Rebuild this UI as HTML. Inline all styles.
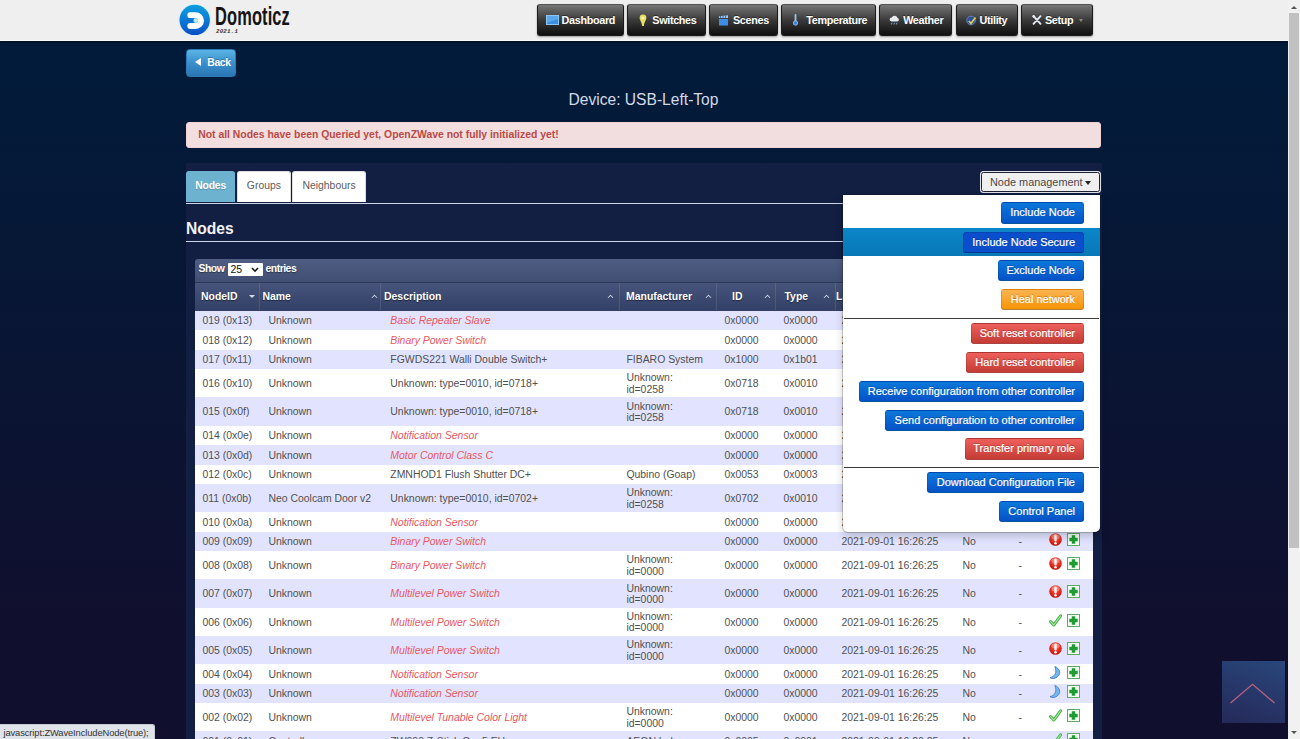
<!DOCTYPE html>
<html lang="en">
<head>
<meta charset="utf-8">
<title>Domoticz</title>
<style>
*{box-sizing:border-box;}
html,body{margin:0;padding:0;}
body{width:1300px;height:739px;overflow:hidden;position:relative;font-family:"Liberation Sans",Arial,sans-serif;font-size:11px;color:#444;background:#0a1432;}
#page{position:absolute;left:0;top:0;width:1287.5px;height:739px;overflow:hidden;background:linear-gradient(180deg,#021b3a 0px,#021b3a 60px,#100f2e 620px,#100f2e 739px);}
/* ---------- navbar ---------- */
#nav{position:absolute;left:0;top:0;width:100%;height:40.5px;background:#efefef;border-bottom:1px solid #fafafa;box-shadow:0 1px 2px rgba(0,0,0,.6);}
#logo{position:absolute;left:178px;top:3px;width:33px;height:33px;}
#brand{position:absolute;left:215px;top:1.3px;font-size:26.5px;line-height:30px;color:#151515;transform:scaleX(.62);transform-origin:0 0;white-space:nowrap;letter-spacing:.2px;font-weight:bold;}
#ver{position:absolute;left:216px;top:29.3px;font:italic bold 5.8px/6px "Liberation Mono",monospace;color:#333;letter-spacing:.2px;}
.nb{position:absolute;top:4px;height:32px;border-radius:3px;background:linear-gradient(180deg,#767676 0%,#585858 25%,#3a3a3a 50%,#242424 75%,#0f0f0f 100%);border:1px solid #1a1a1a;border-top-color:#555;box-shadow:0 1px 2px rgba(0,0,0,.35);color:#fff;font-weight:bold;font-size:10.8px;line-height:30px;white-space:nowrap;letter-spacing:-.33px;text-shadow:0 -1px 0 rgba(0,0,0,.4);}
.nb span{position:absolute;top:0;}
.nb svg{position:absolute;}
/* ---------- page head ---------- */
#back{position:absolute;left:186px;top:49px;width:49.5px;height:27.5px;border-radius:3.5px;background:linear-gradient(180deg,#5ab4e4 0%,#3a8fcc 50%,#2a76b4 100%);border:1px solid #2f7ab5;color:#fff;font-weight:bold;font-size:10.4px;letter-spacing:-.3px;line-height:25px;text-shadow:0 -1px 0 rgba(0,0,0,.25);}
#back span{position:absolute;left:20.2px;top:0;}
#back i{position:absolute;left:7.8px;top:8.3px;width:0;height:0;border-top:4.7px solid transparent;border-bottom:4.7px solid transparent;border-right:6.4px solid #fff;}
#title{position:absolute;left:0;top:90.4px;width:1287px;text-align:center;font-size:15.6px;line-height:20px;color:#d2dae8;}
#alert{position:absolute;left:186px;top:121.8px;width:915px;height:26.2px;border-radius:3px;background:#f2dede;border:1px solid #eed3d7;color:#b94a48;font-weight:bold;font-size:10.4px;line-height:24.4px;padding-left:11.2px;}
#panel{position:absolute;left:186px;top:163px;width:916px;height:600px;background:#121f43;}
.tab{position:absolute;top:171px;height:30.6px;border-radius:3px 3px 0 0;background:#fff;border:1px solid #ddd;border-bottom:none;color:#5c5c5c;font-size:10.4px;line-height:27.4px;text-align:center;}
.tab.on{background:#6db3cf;border-color:#6db3cf;color:#fff;font-weight:bold;letter-spacing:-.2px;text-shadow:0 1px 1px rgba(0,0,0,.2);}
.hr{position:absolute;left:186px;height:1.2px;background:#cdd5e6;width:912px;}
#h2{position:absolute;left:186px;top:219px;font-size:15.6px;line-height:20px;font-weight:bold;color:#f2f2f4;}
#nm{position:absolute;left:980.5px;top:172.2px;width:119px;height:20.2px;border-radius:2.5px;background:#efefef;border:1px solid #1c2030;box-shadow:0 0 0 1px #dfe1e8;color:#4a4a4a;font-size:10.9px;line-height:18px;padding-left:8.5px;}
#nm i{position:absolute;right:7.5px;top:7.5px;width:0;height:0;border-left:3.5px solid transparent;border-right:3.5px solid transparent;border-top:4px solid #222;}
/* ---------- table ---------- */
#tbar{position:absolute;left:194.5px;top:259px;width:898.5px;height:24px;border-radius:3px 3px 0 0;background:linear-gradient(180deg,#4f5d82 0%,#465479 60%,#414e73 100%);color:#fff;font-weight:bold;font-size:10.45px;letter-spacing:-.5px;line-height:19px;text-shadow:0 1px 1px rgba(0,0,0,.4);}
#thead{position:absolute;left:194.5px;top:282.4px;width:898.5px;height:28.3px;background:linear-gradient(180deg,#47557c 0%,#3c4a71 50%,#333f66 100%);border-top:1px solid #2c3757;color:#fff;font-weight:bold;font-size:10.45px;line-height:27.6px;text-shadow:0 1px 1px rgba(0,0,0,.5);}
#thead b{position:absolute;top:0;font-weight:bold;}
#thead u{position:absolute;top:0;width:1px;height:27px;background:rgba(255,255,255,.10);border-left:1px solid rgba(0,0,0,.18);width:2px;}
#thead i{position:absolute;top:12px;width:5px;height:5px;}
#tb{position:absolute;left:194.5px;top:310.7px;width:898.5px;border-collapse:collapse;table-layout:fixed;font-size:10.45px;line-height:11.5px;color:#505050;}
#tb td{padding:1.2px 0 0 .4px;vertical-align:middle;white-space:nowrap;overflow:hidden;}
#tb tr{height:19.5px;background:#fff;}
#tb tr.o{background:#e2e4ff;}
#tb tr.d{height:28.2px;}
#tb td.r{color:#e8565f;font-style:italic;}
#tb td:nth-child(4){padding-left:1.3px;}
#sel{position:absolute;left:33px;top:4px;width:35.4px;height:13px;background:#fff;border-radius:1px;color:#111;font-weight:normal;font-size:10.5px;letter-spacing:0;line-height:13px;padding-left:3px;text-shadow:none;}
#sel svg{position:absolute;right:3.5px;top:3.6px;}
#thead i.up{border-left:1.5px solid transparent;}
#thead i.up:after{content:"";position:absolute;left:0;top:0;width:4px;height:4px;border-left:1.7px solid #e4e7f0;border-top:1.7px solid #e4e7f0;transform:rotate(45deg) scale(.8);}
#thead i.dn:after{content:"";position:absolute;left:0;top:0;width:0;height:0;border-left:3px solid transparent;border-right:3px solid transparent;border-top:3.500px solid #d8dce8;}
.ic{vertical-align:middle;position:relative;top:-2.3px;}
/* ---------- dropdown ---------- */
#dd{position:absolute;left:843.2px;top:195.2px;width:256.8px;height:336.6px;background:#fff;border-radius:0 0 5px 5px;box-shadow:0 0 0 1px rgba(0,0,0,.18),0 4px 8px rgba(0,0,0,.2);}
#hl{position:absolute;left:0;top:33px;width:100%;height:28px;background:linear-gradient(180deg,#0a86c8,#0878b6);}
.dv{position:absolute;left:1px;right:1px;height:1.200px;background:#3a3a3a;}
.bt{position:absolute;height:21.100px;border-radius:3px;color:#fff;font-size:11px;line-height:19px;text-align:right;padding-right:7.7px;white-space:nowrap;text-shadow:0 -1px 0 rgba(0,0,0,.25);-webkit-text-stroke:.2px #fff;border:1px solid rgba(0,0,0,.12);border-bottom-color:rgba(0,0,0,.28);}
.bt.b{background:linear-gradient(180deg,#0b78da,#0552c8);}
.bt.bh{background:#0a4ecb;}
.bt.w{background:linear-gradient(180deg,#fbb450,#f89406);}
.bt.d{background:linear-gradient(180deg,#ee5f5b,#c43c35);}
#totop{position:absolute;left:1222px;top:660.800px;width:62.500px;height:61.800px;background:linear-gradient(200deg,#29477b 0%,#27376a 50%,#252a58 100%);}
#status{position:absolute;left:0;top:723.500px;width:154.500px;height:16px;background:#dfe3ea;border-top:1px solid #c8ccd4;border-right:1px solid #c8ccd4;border-radius:0 3px 0 0;font-size:9.4px;line-height:15px;padding-left:3.500px;color:#333;white-space:nowrap;letter-spacing:-.12px;}
#sb{position:absolute;left:1287.500px;top:0;width:12.500px;height:739px;background:#f1f1f1;}
#sb b{position:absolute;left:1.500px;top:13px;width:10px;height:535px;background:#c1c1c1;}
#sb i{position:absolute;left:3.500px;width:0;height:0;border-left:3px solid transparent;border-right:3px solid transparent;}
#sb i.au{top:5.500px;border-bottom:3.500px solid #555;}
#sb i.ad{top:731px;border-top:3.500px solid #555;}
</style>
</head>
<body>
<div id="page">
<svg width="0" height="0" style="position:absolute"><defs><radialGradient id="rg" cx=".5" cy=".3" r=".75"><stop offset="0" stop-color="#ff7668"/><stop offset=".55" stop-color="#ea2a1c"/><stop offset="1" stop-color="#b81208"/></radialGradient></defs></svg>
<div id="panel"></div>
<div id="nav">
<svg id="logo" viewBox="0 0 33 33"><defs><linearGradient id="lg" x1="0" y1="0" x2="0" y2="1"><stop offset="0" stop-color="#0d9fe0"/><stop offset=".5" stop-color="#0b7ad6"/><stop offset="1" stop-color="#0b50c4"/></linearGradient></defs><circle cx="16.7" cy="16.9" r="16.3" fill="#def1fc"/><circle cx="16.7" cy="16.9" r="15.2" fill="url(#lg)"/><path d="M12.3 12.2H17.6A5.4 5.4 0 0 1 17.6 23H12.3" fill="none" stroke="#fff" stroke-width="6" stroke-linecap="round"/><path d="M9 17.6H16" stroke="#0b74d2" stroke-width="4.8"/><circle cx="17.7" cy="17.6" r="2.3" fill="#b4ecff"/></svg>
<div id="brand">Domoticz</div>
<div id="ver">2021.1</div>
<div class="nb" style="left:537.3px;width:87.1px"><svg style="left:7.7px;top:10px" width="13" height="10" viewBox="0 0 13 10"><rect x=".5" y=".5" width="12" height="9" fill="#3b8fe0" stroke="#8cc4f2"/><path d="M1 1h11v3L1 8z" fill="#5aa8ee"/></svg><span style="left:23.3px">Dashboard</span></div>
<div class="nb" style="left:627.3px;width:78.3px"><svg style="left:10.7px;top:8.5px" width="8" height="13" viewBox="0 0 8 13"><path d="M4 .6a3.400 3.400 0 0 1 3.400 3.400c0 2.200-2.100 3.600-2.500 8H3.100C2.700 7.600.6 6.200.6 4A3.400 3.400 0 0 1 4 .6z" fill="#e4dc68"/><circle cx="4" cy="4" r="1.600" fill="#f6f2a8"/></svg><span style="left:24.0px">Switches</span></div>
<div class="nb" style="left:708.8px;width:69.0px"><svg style="left:8.7px;top:9.5px" width="11" height="11" viewBox="0 0 11 11"><rect x="1" y="4" width="9" height="6.500" fill="#3d8ee6"/><path d="M1 1.200l9-1v2.800H1z" fill="#9cc6f2"/><path d="M2.500 1v2M5 .8v2.200M7.500 .5v2.500" stroke="#2a5c9a" stroke-width=".8"/></svg><span style="left:23.2px">Scenes</span></div>
<div class="nb" style="left:780.8px;width:95.1px"><svg style="left:10.7px;top:9px" width="7" height="12" viewBox="0 0 7 12"><path d="M3.500 1v7" stroke="#9cc4ee" stroke-width="1.800" stroke-linecap="round"/><circle cx="3.500" cy="9" r="2.200" fill="#3d86dc" stroke="#9cc4ee" stroke-width=".8"/></svg><span style="left:24.5px">Temperature</span></div>
<div class="nb" style="left:879.3px;width:73.2px"><svg style="left:8.7px;top:9.500px" width="11" height="11" viewBox="0 0 11 11"><path d="M2.500 6.500a2 2 0 0 1 .3-4 3 3 0 0 1 5.600.3 1.900 1.900 0 0 1 0 3.700z" fill="#e6eaee"/><path d="M3 7.800l-.6 1.600M5.500 7.800l-.6 1.600M8 7.800l-.6 1.600" stroke="#8fb8e8" stroke-width=".9"/></svg><span style="left:22.9px">Weather</span></div>
<div class="nb" style="left:955.8px;width:61.8px"><svg style="left:9.2px;top:9.500px" width="11" height="11" viewBox="0 0 11 11"><circle cx="5" cy="5.500" r="4.300" fill="#2c4f9a" stroke="#6f8fd0" stroke-width=".8"/><path d="M3 6l2 2.500L9.500 2.500" fill="none" stroke="#e8d24a" stroke-width="1.600"/></svg><span style="left:22.8px">Utility</span></div>
<div class="nb" style="left:1020.8px;width:72.0px"><svg style="left:10.2px;top:9.5px" width="10" height="10" viewBox="0 0 10 10"><path d="M1.500 1.200l7 7.600M8.500 1.200L1.500 8.800" stroke="#e6ebf5" stroke-width="1.800" stroke-linecap="round"/><path d="M.8 2.200l1.800-1.600" stroke="#e6ebf5" stroke-width="2.400"/></svg><span style="left:23.2px">Setup</span><i style="position:absolute;left:56.8px;top:14px;width:0;height:0;border-left:2.5px solid transparent;border-right:2.5px solid transparent;border-top:3px solid #888"></i></div>
</div>
<div id="back"><i></i><span>Back</span></div>
<div id="title">Device: USB-Left-Top</div>
<div id="alert">Not all Nodes have been Queried yet, OpenZWave not fully initialized yet!</div>
<div class="tab on" style="left:186.2px;width:48.8px">Nodes</div>
<div class="tab" style="left:236.9px;width:54px">Groups</div>
<div class="tab" style="left:292.3px;width:73.5px">Neighbours</div>
<div class="hr" style="top:202.5px"></div>
<div id="h2">Nodes</div>
<div class="hr" style="top:240.5px"></div>
<div id="nm">Node management<i></i></div>
<div id="tbar"><span style="position:absolute;left:4px;top:0">Show</span><span id="sel">25<svg width="8" height="6" viewBox="0 0 8 6"><path d="M1 1l3 3.200L7 1" fill="none" stroke="#111" stroke-width="1.600"/></svg></span><span style="position:absolute;left:71px;top:0">entries</span></div>
<div id="thead">
<b style="left:6.5px">NodeID</b><i style="left:54.3px" class="dn"></i>
<u style="left:63px"></u><b style="left:68px">Name</b><i style="left:176px" class="up"></i>
<u style="left:184.5px"></u><b style="left:189.5px">Description</b><i style="left:412px" class="up"></i>
<u style="left:423px"></u><b style="left:431.5px">Manufacturer</b><i style="left:510px" class="up"></i>
<u style="left:520.6px"></u><b style="left:537.5px">ID</b><i style="left:569px" class="up"></i>
<u style="left:579px"></u><b style="left:590px">Type</b><i style="left:628px" class="up"></i>
<u style="left:639px"></u><b style="left:641.5px">Last Seen</b><i style="left:738px" class="up"></i>
<u style="left:750px"></u><b style="left:756px">Enabled</b>
<u style="left:810px"></u><b style="left:816px">Poll</b>
<u style="left:848px"></u>
</div>
<table id="tb"><colgroup><col style="width:7.5px"><col style="width:66px"><col style="width:121px"><col style="width:237px"><col style="width:98px"><col style="width:59px"><col style="width:58px"><col style="width:121px"><col style="width:56px"><col style="width:31px"><col></colgroup>
<tr class="o"><td></td><td>019 (0x13)</td><td>Unknown</td><td class=r>Basic Repeater Slave</td><td></td><td>0x0000</td><td>0x0000</td><td>2021-09-01 16:26:25</td><td>No</td><td>-</td><td><svg class="ic" width="13" height="13" viewBox="0 0 13 13"><circle cx="6.5" cy="6.5" r="6.3" fill="url(#rg)"/><ellipse cx="6.5" cy="3.8" rx="4.2" ry="2.6" fill="#fff" opacity=".28"/><path d="M6.5 2.7v4.8" stroke="#fff" stroke-width="2.3" stroke-linecap="round"/><circle cx="6.5" cy="10.2" r="1.25" fill="#fff"/></svg><svg class="ic" style="margin-left:5px" width="13" height="13" viewBox="0 0 13 13"><rect x=".5" y=".5" width="12" height="12" fill="#f4fff4" stroke="#5fa865" stroke-width="1"/><path d="M6.500 2.300v8.400M2.300 6.500h8.400" stroke="#1f9a35" stroke-width="3.400"/></svg></td></tr>
<tr class=""><td></td><td>018 (0x12)</td><td>Unknown</td><td class=r>Binary Power Switch</td><td></td><td>0x0000</td><td>0x0000</td><td>2021-09-01 16:26:25</td><td>No</td><td>-</td><td><svg class="ic" width="13" height="13" viewBox="0 0 13 13"><circle cx="6.5" cy="6.5" r="6.3" fill="url(#rg)"/><ellipse cx="6.5" cy="3.8" rx="4.2" ry="2.6" fill="#fff" opacity=".28"/><path d="M6.5 2.7v4.8" stroke="#fff" stroke-width="2.3" stroke-linecap="round"/><circle cx="6.5" cy="10.2" r="1.25" fill="#fff"/></svg><svg class="ic" style="margin-left:5px" width="13" height="13" viewBox="0 0 13 13"><rect x=".5" y=".5" width="12" height="12" fill="#f4fff4" stroke="#5fa865" stroke-width="1"/><path d="M6.500 2.300v8.400M2.300 6.500h8.400" stroke="#1f9a35" stroke-width="3.400"/></svg></td></tr>
<tr class="o"><td></td><td>017 (0x11)</td><td>Unknown</td><td>FGWDS221 Walli Double Switch+</td><td>FIBARO System</td><td>0x1000</td><td>0x1b01</td><td>2021-09-01 16:26:25</td><td>No</td><td>-</td><td><svg class="ic" width="13" height="13" viewBox="0 0 13 13"><path d="M1.6 7.6l3.2 3.4L11.6 1.800" fill="none" stroke="#45b04c" stroke-width="3" stroke-linecap="round" stroke-linejoin="round"/><path d="M1.6 7.6l3.2 3.4L11.6 1.800" fill="none" stroke="#a4e495" stroke-width="1.200" stroke-linecap="round" stroke-linejoin="round"/></svg><svg class="ic" style="margin-left:5px" width="13" height="13" viewBox="0 0 13 13"><rect x=".5" y=".5" width="12" height="12" fill="#f4fff4" stroke="#5fa865" stroke-width="1"/><path d="M6.500 2.300v8.400M2.300 6.500h8.400" stroke="#1f9a35" stroke-width="3.400"/></svg></td></tr>
<tr class="d"><td></td><td>016 (0x10)</td><td>Unknown</td><td>Unknown: type=0010, id=0718+</td><td>Unknown:<br>id=0258</td><td>0x0718</td><td>0x0010</td><td>2021-09-01 16:26:25</td><td>No</td><td>-</td><td><svg class="ic" width="13" height="13" viewBox="0 0 13 13"><path d="M1.6 7.6l3.2 3.4L11.6 1.800" fill="none" stroke="#45b04c" stroke-width="3" stroke-linecap="round" stroke-linejoin="round"/><path d="M1.6 7.6l3.2 3.4L11.6 1.800" fill="none" stroke="#a4e495" stroke-width="1.200" stroke-linecap="round" stroke-linejoin="round"/></svg><svg class="ic" style="margin-left:5px" width="13" height="13" viewBox="0 0 13 13"><rect x=".5" y=".5" width="12" height="12" fill="#f4fff4" stroke="#5fa865" stroke-width="1"/><path d="M6.500 2.300v8.400M2.300 6.500h8.400" stroke="#1f9a35" stroke-width="3.400"/></svg></td></tr>
<tr class="o d"><td></td><td>015 (0x0f)</td><td>Unknown</td><td>Unknown: type=0010, id=0718+</td><td>Unknown:<br>id=0258</td><td>0x0718</td><td>0x0010</td><td>2021-09-01 16:26:25</td><td>No</td><td>-</td><td><svg class="ic" width="13" height="13" viewBox="0 0 13 13"><path d="M1.6 7.6l3.2 3.4L11.6 1.800" fill="none" stroke="#45b04c" stroke-width="3" stroke-linecap="round" stroke-linejoin="round"/><path d="M1.6 7.6l3.2 3.4L11.6 1.800" fill="none" stroke="#a4e495" stroke-width="1.200" stroke-linecap="round" stroke-linejoin="round"/></svg><svg class="ic" style="margin-left:5px" width="13" height="13" viewBox="0 0 13 13"><rect x=".5" y=".5" width="12" height="12" fill="#f4fff4" stroke="#5fa865" stroke-width="1"/><path d="M6.500 2.300v8.400M2.300 6.500h8.400" stroke="#1f9a35" stroke-width="3.400"/></svg></td></tr>
<tr class=""><td></td><td>014 (0x0e)</td><td>Unknown</td><td class=r>Notification Sensor</td><td></td><td>0x0000</td><td>0x0000</td><td>2021-09-01 16:26:25</td><td>No</td><td>-</td><td><svg class="ic" width="13" height="13" viewBox="0 0 13 13"><path d="M5.800 .5C11.500 2.500 13 9.500 6 12.200 3.800 12.900 1.800 12.400 1 11.500 5.500 11 8.500 6.500 5.800 .5z" fill="#74b8f2" stroke="#3f72c0" stroke-width=".8" stroke-linejoin="round"/></svg><svg class="ic" style="margin-left:5px" width="13" height="13" viewBox="0 0 13 13"><rect x=".5" y=".5" width="12" height="12" fill="#f4fff4" stroke="#5fa865" stroke-width="1"/><path d="M6.500 2.300v8.400M2.300 6.500h8.400" stroke="#1f9a35" stroke-width="3.400"/></svg></td></tr>
<tr class="o"><td></td><td>013 (0x0d)</td><td>Unknown</td><td class=r>Motor Control Class C</td><td></td><td>0x0000</td><td>0x0000</td><td>2021-09-01 16:26:25</td><td>No</td><td>-</td><td><svg class="ic" width="13" height="13" viewBox="0 0 13 13"><circle cx="6.5" cy="6.5" r="6.3" fill="url(#rg)"/><ellipse cx="6.5" cy="3.8" rx="4.2" ry="2.6" fill="#fff" opacity=".28"/><path d="M6.5 2.7v4.8" stroke="#fff" stroke-width="2.3" stroke-linecap="round"/><circle cx="6.5" cy="10.2" r="1.25" fill="#fff"/></svg><svg class="ic" style="margin-left:5px" width="13" height="13" viewBox="0 0 13 13"><rect x=".5" y=".5" width="12" height="12" fill="#f4fff4" stroke="#5fa865" stroke-width="1"/><path d="M6.500 2.300v8.400M2.300 6.500h8.400" stroke="#1f9a35" stroke-width="3.400"/></svg></td></tr>
<tr class=""><td></td><td>012 (0x0c)</td><td>Unknown</td><td>ZMNHOD1 Flush Shutter DC+</td><td>Qubino (Goap)</td><td>0x0053</td><td>0x0003</td><td>2021-09-01 16:26:25</td><td>No</td><td>-</td><td><svg class="ic" width="13" height="13" viewBox="0 0 13 13"><path d="M1.6 7.6l3.2 3.4L11.6 1.800" fill="none" stroke="#45b04c" stroke-width="3" stroke-linecap="round" stroke-linejoin="round"/><path d="M1.6 7.6l3.2 3.4L11.6 1.800" fill="none" stroke="#a4e495" stroke-width="1.200" stroke-linecap="round" stroke-linejoin="round"/></svg><svg class="ic" style="margin-left:5px" width="13" height="13" viewBox="0 0 13 13"><rect x=".5" y=".5" width="12" height="12" fill="#f4fff4" stroke="#5fa865" stroke-width="1"/><path d="M6.500 2.300v8.400M2.300 6.500h8.400" stroke="#1f9a35" stroke-width="3.400"/></svg></td></tr>
<tr class="o d"><td></td><td>011 (0x0b)</td><td>Neo Coolcam Door v2</td><td>Unknown: type=0010, id=0702+</td><td>Unknown:<br>id=0258</td><td>0x0702</td><td>0x0010</td><td>2021-09-01 16:26:25</td><td>No</td><td>-</td><td><svg class="ic" width="13" height="13" viewBox="0 0 13 13"><path d="M5.800 .5C11.500 2.500 13 9.500 6 12.200 3.800 12.900 1.800 12.400 1 11.500 5.500 11 8.500 6.500 5.800 .5z" fill="#74b8f2" stroke="#3f72c0" stroke-width=".8" stroke-linejoin="round"/></svg><svg class="ic" style="margin-left:5px" width="13" height="13" viewBox="0 0 13 13"><rect x=".5" y=".5" width="12" height="12" fill="#f4fff4" stroke="#5fa865" stroke-width="1"/><path d="M6.500 2.300v8.400M2.300 6.500h8.400" stroke="#1f9a35" stroke-width="3.400"/></svg></td></tr>
<tr class=""><td></td><td>010 (0x0a)</td><td>Unknown</td><td class=r>Notification Sensor</td><td></td><td>0x0000</td><td>0x0000</td><td>2021-09-01 16:26:25</td><td>No</td><td>-</td><td><svg class="ic" width="13" height="13" viewBox="0 0 13 13"><path d="M5.800 .5C11.500 2.500 13 9.500 6 12.200 3.800 12.900 1.800 12.400 1 11.500 5.500 11 8.500 6.500 5.800 .5z" fill="#74b8f2" stroke="#3f72c0" stroke-width=".8" stroke-linejoin="round"/></svg><svg class="ic" style="margin-left:5px" width="13" height="13" viewBox="0 0 13 13"><rect x=".5" y=".5" width="12" height="12" fill="#f4fff4" stroke="#5fa865" stroke-width="1"/><path d="M6.500 2.300v8.400M2.300 6.500h8.400" stroke="#1f9a35" stroke-width="3.400"/></svg></td></tr>
<tr class="o"><td></td><td>009 (0x09)</td><td>Unknown</td><td class=r>Binary Power Switch</td><td></td><td>0x0000</td><td>0x0000</td><td>2021-09-01 16:26:25</td><td>No</td><td>-</td><td><svg class="ic" width="13" height="13" viewBox="0 0 13 13"><circle cx="6.5" cy="6.5" r="6.3" fill="url(#rg)"/><ellipse cx="6.5" cy="3.8" rx="4.2" ry="2.6" fill="#fff" opacity=".28"/><path d="M6.5 2.7v4.8" stroke="#fff" stroke-width="2.3" stroke-linecap="round"/><circle cx="6.5" cy="10.2" r="1.25" fill="#fff"/></svg><svg class="ic" style="margin-left:5px" width="13" height="13" viewBox="0 0 13 13"><rect x=".5" y=".5" width="12" height="12" fill="#f4fff4" stroke="#5fa865" stroke-width="1"/><path d="M6.500 2.300v8.400M2.300 6.500h8.400" stroke="#1f9a35" stroke-width="3.400"/></svg></td></tr>
<tr class="d"><td></td><td>008 (0x08)</td><td>Unknown</td><td class=r>Binary Power Switch</td><td>Unknown:<br>id=0000</td><td>0x0000</td><td>0x0000</td><td>2021-09-01 16:26:25</td><td>No</td><td>-</td><td><svg class="ic" width="13" height="13" viewBox="0 0 13 13"><circle cx="6.5" cy="6.5" r="6.3" fill="url(#rg)"/><ellipse cx="6.5" cy="3.8" rx="4.2" ry="2.6" fill="#fff" opacity=".28"/><path d="M6.5 2.7v4.8" stroke="#fff" stroke-width="2.3" stroke-linecap="round"/><circle cx="6.5" cy="10.2" r="1.25" fill="#fff"/></svg><svg class="ic" style="margin-left:5px" width="13" height="13" viewBox="0 0 13 13"><rect x=".5" y=".5" width="12" height="12" fill="#f4fff4" stroke="#5fa865" stroke-width="1"/><path d="M6.500 2.300v8.400M2.300 6.500h8.400" stroke="#1f9a35" stroke-width="3.400"/></svg></td></tr>
<tr class="o d"><td></td><td>007 (0x07)</td><td>Unknown</td><td class=r>Multilevel Power Switch</td><td>Unknown:<br>id=0000</td><td>0x0000</td><td>0x0000</td><td>2021-09-01 16:26:25</td><td>No</td><td>-</td><td><svg class="ic" width="13" height="13" viewBox="0 0 13 13"><circle cx="6.5" cy="6.5" r="6.3" fill="url(#rg)"/><ellipse cx="6.5" cy="3.8" rx="4.2" ry="2.6" fill="#fff" opacity=".28"/><path d="M6.5 2.7v4.8" stroke="#fff" stroke-width="2.3" stroke-linecap="round"/><circle cx="6.5" cy="10.2" r="1.25" fill="#fff"/></svg><svg class="ic" style="margin-left:5px" width="13" height="13" viewBox="0 0 13 13"><rect x=".5" y=".5" width="12" height="12" fill="#f4fff4" stroke="#5fa865" stroke-width="1"/><path d="M6.500 2.300v8.400M2.300 6.500h8.400" stroke="#1f9a35" stroke-width="3.400"/></svg></td></tr>
<tr class="d"><td></td><td>006 (0x06)</td><td>Unknown</td><td class=r>Multilevel Power Switch</td><td>Unknown:<br>id=0000</td><td>0x0000</td><td>0x0000</td><td>2021-09-01 16:26:25</td><td>No</td><td>-</td><td><svg class="ic" width="13" height="13" viewBox="0 0 13 13"><path d="M1.6 7.6l3.2 3.4L11.6 1.800" fill="none" stroke="#45b04c" stroke-width="3" stroke-linecap="round" stroke-linejoin="round"/><path d="M1.6 7.6l3.2 3.4L11.6 1.800" fill="none" stroke="#a4e495" stroke-width="1.200" stroke-linecap="round" stroke-linejoin="round"/></svg><svg class="ic" style="margin-left:5px" width="13" height="13" viewBox="0 0 13 13"><rect x=".5" y=".5" width="12" height="12" fill="#f4fff4" stroke="#5fa865" stroke-width="1"/><path d="M6.500 2.300v8.400M2.300 6.500h8.400" stroke="#1f9a35" stroke-width="3.400"/></svg></td></tr>
<tr class="o d"><td></td><td>005 (0x05)</td><td>Unknown</td><td class=r>Multilevel Power Switch</td><td>Unknown:<br>id=0000</td><td>0x0000</td><td>0x0000</td><td>2021-09-01 16:26:25</td><td>No</td><td>-</td><td><svg class="ic" width="13" height="13" viewBox="0 0 13 13"><circle cx="6.5" cy="6.5" r="6.3" fill="url(#rg)"/><ellipse cx="6.5" cy="3.8" rx="4.2" ry="2.6" fill="#fff" opacity=".28"/><path d="M6.5 2.7v4.8" stroke="#fff" stroke-width="2.3" stroke-linecap="round"/><circle cx="6.5" cy="10.2" r="1.25" fill="#fff"/></svg><svg class="ic" style="margin-left:5px" width="13" height="13" viewBox="0 0 13 13"><rect x=".5" y=".5" width="12" height="12" fill="#f4fff4" stroke="#5fa865" stroke-width="1"/><path d="M6.500 2.300v8.400M2.300 6.500h8.400" stroke="#1f9a35" stroke-width="3.400"/></svg></td></tr>
<tr class=""><td></td><td>004 (0x04)</td><td>Unknown</td><td class=r>Notification Sensor</td><td></td><td>0x0000</td><td>0x0000</td><td>2021-09-01 16:26:25</td><td>No</td><td>-</td><td><svg class="ic" width="13" height="13" viewBox="0 0 13 13"><path d="M5.800 .5C11.500 2.500 13 9.500 6 12.200 3.800 12.900 1.800 12.400 1 11.500 5.500 11 8.500 6.500 5.800 .5z" fill="#74b8f2" stroke="#3f72c0" stroke-width=".8" stroke-linejoin="round"/></svg><svg class="ic" style="margin-left:5px" width="13" height="13" viewBox="0 0 13 13"><rect x=".5" y=".5" width="12" height="12" fill="#f4fff4" stroke="#5fa865" stroke-width="1"/><path d="M6.500 2.300v8.400M2.300 6.500h8.400" stroke="#1f9a35" stroke-width="3.400"/></svg></td></tr>
<tr class="o"><td></td><td>003 (0x03)</td><td>Unknown</td><td class=r>Notification Sensor</td><td></td><td>0x0000</td><td>0x0000</td><td>2021-09-01 16:26:25</td><td>No</td><td>-</td><td><svg class="ic" width="13" height="13" viewBox="0 0 13 13"><path d="M5.800 .5C11.500 2.500 13 9.500 6 12.200 3.800 12.900 1.800 12.400 1 11.500 5.500 11 8.500 6.500 5.800 .5z" fill="#74b8f2" stroke="#3f72c0" stroke-width=".8" stroke-linejoin="round"/></svg><svg class="ic" style="margin-left:5px" width="13" height="13" viewBox="0 0 13 13"><rect x=".5" y=".5" width="12" height="12" fill="#f4fff4" stroke="#5fa865" stroke-width="1"/><path d="M6.500 2.300v8.400M2.300 6.500h8.400" stroke="#1f9a35" stroke-width="3.400"/></svg></td></tr>
<tr class="d"><td></td><td>002 (0x02)</td><td>Unknown</td><td class=r>Multilevel Tunable Color Light</td><td>Unknown:<br>id=0000</td><td>0x0000</td><td>0x0000</td><td>2021-09-01 16:26:25</td><td>No</td><td>-</td><td><svg class="ic" width="13" height="13" viewBox="0 0 13 13"><path d="M1.6 7.6l3.2 3.4L11.6 1.800" fill="none" stroke="#45b04c" stroke-width="3" stroke-linecap="round" stroke-linejoin="round"/><path d="M1.6 7.6l3.2 3.4L11.6 1.800" fill="none" stroke="#a4e495" stroke-width="1.200" stroke-linecap="round" stroke-linejoin="round"/></svg><svg class="ic" style="margin-left:5px" width="13" height="13" viewBox="0 0 13 13"><rect x=".5" y=".5" width="12" height="12" fill="#f4fff4" stroke="#5fa865" stroke-width="1"/><path d="M6.500 2.300v8.400M2.300 6.500h8.400" stroke="#1f9a35" stroke-width="3.400"/></svg></td></tr>
<tr class="o"><td></td><td>001 (0x01)</td><td>Controller</td><td>ZW090 Z-Stick Gen5 EU</td><td>AEON Labs</td><td>0x0005</td><td>0x0001</td><td>2021-09-01 16:26:25</td><td>No</td><td>-</td><td><svg class="ic" width="13" height="13" viewBox="0 0 13 13"><path d="M1.6 7.6l3.2 3.4L11.6 1.800" fill="none" stroke="#45b04c" stroke-width="3" stroke-linecap="round" stroke-linejoin="round"/><path d="M1.6 7.6l3.2 3.4L11.6 1.800" fill="none" stroke="#a4e495" stroke-width="1.200" stroke-linecap="round" stroke-linejoin="round"/></svg><svg class="ic" style="margin-left:5px" width="13" height="13" viewBox="0 0 13 13"><rect x=".5" y=".5" width="12" height="12" fill="#f4fff4" stroke="#5fa865" stroke-width="1"/><path d="M6.500 2.300v8.400M2.300 6.500h8.400" stroke="#1f9a35" stroke-width="3.400"/></svg></td></tr>
</table>
<div id="dd"><div id="hl"></div><div class="dv" style="top:122.7px"></div><div class="dv" style="top:272.1px"></div>
<a class="bt b" style="left:157.4px;top:7.3px;width:83.1px">Include Node</a>
<a class="bt bh" style="left:120.0px;top:36.6px;width:120.5px">Include Node Secure</a>
<a class="bt b" style="left:154.4px;top:65.0px;width:86.1px">Exclude Node</a>
<a class="bt w" style="left:157.9px;top:94.2px;width:82.6px">Heal network</a>
<a class="bt d" style="left:127.5px;top:127.5px;width:113.0px">Soft reset controller</a>
<a class="bt d" style="left:122.7px;top:156.4px;width:117.8px">Hard reset controller</a>
<a class="bt b" style="left:15.8px;top:185.7px;width:224.7px">Receive configuration from other controller</a>
<a class="bt b" style="left:42.3px;top:214.4px;width:198.2px">Send configuration to other controller</a>
<a class="bt d" style="left:121.4px;top:243.3px;width:119.1px">Transfer primary role</a>
<a class="bt b" style="left:84.3px;top:277.2px;width:156.2px">Download Configuration File</a>
<a class="bt b" style="left:155.8px;top:306.0px;width:84.7px">Control Panel</a>
</div>
<div id="totop"><svg width="63" height="62" viewBox="0 0 63 62"><path d="M8.500 42L30.500 23.300 52.500 42" fill="none" stroke="#b8607e" stroke-width="1.300"/></svg></div>
<div id="status">javascript:ZWaveIncludeNode(true);</div>
</div>
<div id="sb"><i class="au"></i><b></b><i class="ad"></i></div>
</body>
</html>
